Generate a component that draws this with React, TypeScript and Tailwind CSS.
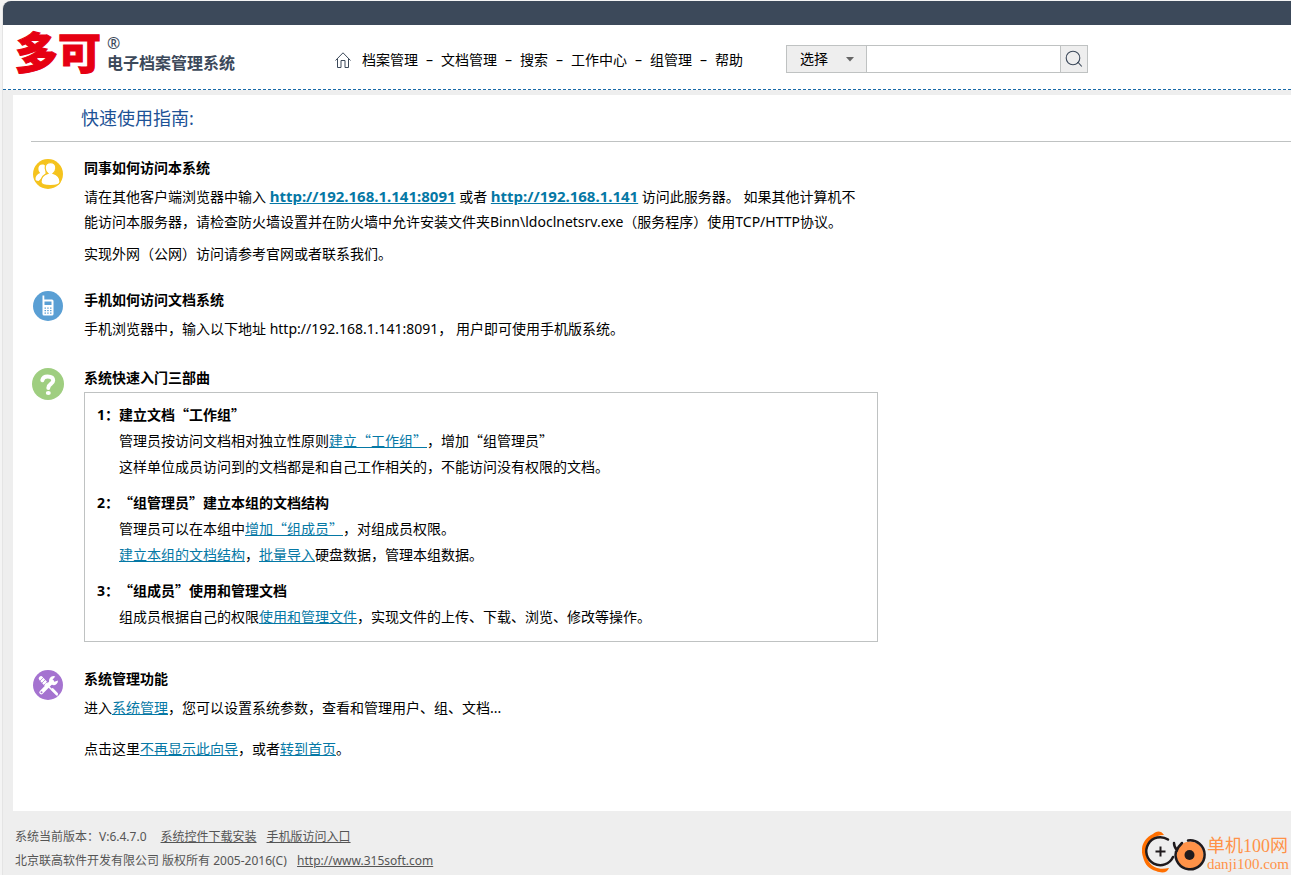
import type { ReactNode } from 'react';

const NAV_ITEMS = ['档案管理', '文档管理', '搜索', '工作中心', '组管理', '帮助'];

// Full-width curly quotes come from the CJK face, not the Latin one
function Quoted({ children }: { children: ReactNode }) {
  return (
    <>
      <span className="font-['Noto_Sans_CJK_SC',sans-serif] leading-none">“</span>
      {children}
      <span className="font-['Noto_Sans_CJK_SC',sans-serif] leading-none">”</span>
    </>
  );
}

function TextLink({ children, bold = false }: { children: ReactNode; bold?: boolean }) {
  return (
    <a
      href="#"
      className={bold ? 'text-[15px] leading-5 font-bold text-[#0578a5] underline' : 'text-[#0578a5] underline'}
    >
      {children}
    </a>
  );
}

function HomeIcon() {
  return (
    <svg width="16" height="16" viewBox="0 0 16 16" fill="none" stroke="#3c495a" strokeWidth="1" aria-hidden="true">
      <path d="M0.5 8.5 8 0.8l7.5 7.7M2.5 7v8.5h3.5V8.5h4v7h3.5V7" />
    </svg>
  );
}

function SearchIcon() {
  return (
    <svg width="18" height="18" viewBox="0 0 18 18" fill="none" stroke="#3c495a" strokeWidth="1.1" aria-hidden="true">
      <circle cx="8" cy="8" r="6.8" />
      <path d="M12 12.5h1.2l3.6 4" />
    </svg>
  );
}

function UsersIcon() {
  return (
    <svg width="32" height="32" viewBox="0 0 32 32" aria-hidden="true">
      <circle cx="16" cy="16" r="15" fill="#f5c31d" />
      <path
        d="M10.5 6.5c-2.8 0-4.3 2-4.1 4.6.1 1.7.8 2.8 1.7 3.8-2.9 1.2-4.9 3.4-4.6 6.3.1 1.2 1.2 1.6 3 1.8l7-6V8.2c-.7-1.1-1.7-1.7-3-1.7z"
        fill="#fff"
      />
      <path
        d="M18.500 4.600c-3.500 0-5.500 2.400-5.300 5.600.2 2.500 1.300 4.100 2.700 5.200-4.200 1.200-7 4.500-6.900 8.700.1 2.400 3.500 3.600 9.500 3.600s9.400-1.200 9.500-3.600c.1-4.200-2.700-7.500-6.900-8.700 1.400-1.100 2.500-2.700 2.700-5.200.2-3.200-1.800-5.600-5.300-5.600z"
        fill="#fff"
        stroke="#f5c31d"
        strokeWidth="1.2"
      />
    </svg>
  );
}

function PhoneIcon() {
  return (
    <svg width="32" height="32" viewBox="0 0 32 32" aria-hidden="true">
      <circle cx="16" cy="16" r="15" fill="#5a9fd4" />
      <path d="M10.5 5.5h1.8v4h7.7q1.5 0 1.5 1.5v13q0 1.500-1.500 1.500h-8q-1.500 0-1.500-1.500z" fill="#fff" />
      <g fill="#5a9fd4">
        <rect x="12.500" y="11.500" width="7" height="3.500" />
        <rect x="12.500" y="17.500" width="1.500" height="1.200" />
        <rect x="15.200" y="17.500" width="1.500" height="1.200" />
        <rect x="18" y="17.500" width="1.500" height="1.200" />
        <rect x="12.500" y="20" width="1.500" height="1.200" />
        <rect x="15.200" y="20" width="1.500" height="1.200" />
        <rect x="18" y="20" width="1.500" height="1.200" />
        <rect x="12.500" y="22.500" width="1.500" height="1.200" />
        <rect x="15.200" y="22.500" width="1.500" height="1.200" />
        <rect x="18" y="22.500" width="1.500" height="1.200" />
      </g>
    </svg>
  );
}

function HelpIcon() {
  return (
    <svg width="32" height="32" viewBox="0 0 32 32" aria-hidden="true">
      <circle cx="16" cy="16" r="16" fill="#9fce80" />
      <path
        d="M10.300 12.300c.6-2.700 2.600-3.700 5.300-3.700 3.200 0 5.600 1.300 5.600 4 0 3.400-4.900 3.400-4.900 7.400"
        fill="none"
        stroke="#fff"
        strokeWidth="4"
        strokeLinecap="round"
      />
      <ellipse cx="16.300" cy="25" rx="2.500" ry="2.100" fill="#fff" />
    </svg>
  );
}

function ToolsIcon() {
  return (
    <svg width="32" height="32" viewBox="0 0 32 32" aria-hidden="true">
      <circle cx="16" cy="16" r="15" fill="#a573d0" />
      <path d="M9 9.500l4.500 5" stroke="#fff" strokeWidth="4.500" strokeLinecap="round" />
      <path d="M8 12l4-4M10 14l4-4M12 16l4-4" stroke="#a573d0" strokeWidth=".7" />
      <path d="M14 15l11 11" stroke="#fff" strokeWidth="1.500" strokeLinecap="round" />
      <path d="M20.500 20.500l4.300 4.300" stroke="#fff" strokeWidth="2.600" strokeLinecap="round" />
      <path d="M9.300 23.300L20 12.500" stroke="#fff" strokeWidth="4" strokeLinecap="round" />
      <path d="M23.300 7.500a4.500 4.500 0 1 0 2.700 4l-3.600 1.300-2-2z" fill="#fff" />
      <circle cx="9.500" cy="23.200" r="1" fill="#a573d0" />
    </svg>
  );
}

function ReelsMark() {
  return (
    <svg width="64" height="42" viewBox="0 0 64 42" fill="none" aria-hidden="true">
      <path d="M22 4c-3-5-8-4-11-1C1 8-2 17 1 26c2 8 6 12 13 14 6 2.500 11 2 13-3-9 2-16 0-20-6C2 23 3 13 10 8c4-3 7-4 12-4z" fill="#ff6f00" />
      <path d="M26 8.500A14 14 0 1 0 31 26" stroke="#1f1a1d" strokeWidth="2.500" strokeLinecap="round" />
      <path d="M18.500 15.500v10M13.500 20.500h10" stroke="#1f1a1d" strokeWidth="2" />
      <circle cx="48" cy="24" r="13.500" fill="#ff9248" />
      <path d="M46 9.500a14.500 14.500 0 1 1-12 11M32 12c0 3 1 5 3 7 1-3 3-5 5-7" stroke="#1f1a1d" strokeWidth="2.500" strokeLinecap="round" />
      <circle cx="47.500" cy="24" r="5" fill="#1f1a1d" />
    </svg>
  );
}

interface GuideSectionProps {
  icon: ReactNode;
  title: string;
  className?: string;
  children: ReactNode;
}

function GuideSection({ icon, title, className = '', children }: GuideSectionProps) {
  return (
    <section className={`flex items-start gap-5 pl-[19px] ${className}`}>
      <div className="w-8 shrink-0">{icon}</div>
      <div className="min-w-0 flex-1">
        <h2 className="text-sm leading-5 font-bold">{title}</h2>
        {children}
      </div>
    </section>
  );
}

function Header() {
  return (
    <header>
      <div className="h-6 rounded-tl-lg bg-[#3c495a]" />
      <div className="flex h-[65px] items-center border-b border-dashed border-[#1a6aa8] bg-white pl-3">
        <a href="#" className="flex w-[320px] shrink-0 items-center gap-1.5 pb-2">
          <span className="text-[43px] leading-[44px] font-black whitespace-nowrap text-[#e60012] [-webkit-text-stroke:1px_#e60012]">
            多可
          </span>
          <span className="flex flex-col text-[#3c495a]">
            <span className="text-base leading-5">®</span>
            <span className="text-base leading-5 font-bold whitespace-nowrap">电子档案管理系统</span>
          </span>
        </a>

        <nav className="flex shrink-0 items-center pt-1.5 text-sm whitespace-nowrap">
          <a href="#" aria-label="首页" className="mr-[11px]">
            <HomeIcon />
          </a>
          {NAV_ITEMS.map((item, i) => (
            <span key={item} className="flex">
              {i > 0 && <span className="w-[23px] text-center">–</span>}
              <a href="#">{item}</a>
            </span>
          ))}
        </nav>

        <form className="mt-1 ml-[43px] flex h-7 shrink-0 border border-[#bfc2c2]">
          <div className="relative border-r border-[#bfc2c2] bg-[#eee]">
            <select aria-label="选择" className="h-full w-[79px] appearance-none bg-transparent pl-[13px] text-sm outline-none">
              <option>选择</option>
            </select>
            <svg className="pointer-events-none absolute top-[11px] right-3" width="8" height="5" viewBox="0 0 8 5" aria-hidden="true">
              <path d="M0 0h8L4 4.500z" fill="#666" />
            </svg>
          </div>
          <input type="text" aria-label="搜索" className="w-[193px] bg-white px-2 text-sm outline-none" />
          <button type="submit" aria-label="搜索" className="flex w-[27px] items-center justify-center border-l border-[#bfc2c2] bg-[#eee]">
            <SearchIcon />
          </button>
        </form>
      </div>
    </header>
  );
}

function Steps() {
  return (
    <div className="mt-1 flex max-w-[794px] flex-col gap-2.5 border border-[#bfc2c2] px-3 pt-[9px] pb-[11px] text-sm leading-[26px]">
      <div>
        <h3 className="font-bold">
          1：建立文档<Quoted>工作组</Quoted>
        </h3>
        <p className="pl-[22px]">
          管理员按访问文档相对独立性原则
          <TextLink>
            建立<Quoted>工作组</Quoted>
          </TextLink>
          ，增加<Quoted>组管理员</Quoted>
        </p>
        <p className="pl-[22px]">这样单位成员访问到的文档都是和自己工作相关的，不能访问没有权限的文档。</p>
      </div>
      <div>
        <h3 className="font-bold">
          2：<Quoted>组管理员</Quoted>建立本组的文档结构
        </h3>
        <p className="pl-[22px]">
          管理员可以在本组中
          <TextLink>
            增加<Quoted>组成员</Quoted>
          </TextLink>
          ，对组成员权限。
        </p>
        <p className="pl-[22px]">
          <TextLink>建立本组的文档结构</TextLink>，<TextLink>批量导入</TextLink>硬盘数据，管理本组数据。
        </p>
      </div>
      <div>
        <h3 className="font-bold">
          3：<Quoted>组成员</Quoted>使用和管理文档
        </h3>
        <p className="pl-[22px]">
          组成员根据自己的权限<TextLink>使用和管理文件</TextLink>，实现文件的上传、下载、浏览、修改等操作。
        </p>
      </div>
    </div>
  );
}

export default function App() {
  return (
    <div
      lang="zh-CN"
      className="min-h-screen bg-[#f4f4f4] pt-px pl-0.5 font-['Noto_Sans','Noto_Sans_CJK_SC',sans-serif] text-black [text-spacing-trim:space-all]"
    >
      <div className="flex min-h-[calc(100vh-1px)] flex-col rounded-tl-lg border-l border-[#e4e4e4] bg-[#eee]">
        <Header />

        <main className="mt-[5px] ml-2.5 bg-white pb-[50px]">
          <h1 className="ml-[18px] border-b border-[#bfc2c2] pl-[50px] text-lg leading-[46px] text-[#1d5296]">快速使用指南:</h1>

          <GuideSection icon={<UsersIcon />} title="同事如何访问本系统" className="mt-4">
            <p className="mt-1.5 text-sm leading-[25px]">
              请在其他客户端浏览器中输入 <TextLink bold>http://192.168.1.141:8091</TextLink> 或者{' '}
              <TextLink bold>http://192.168.1.141</TextLink> 访问此服务器。 如果其他计算机不
              <br />
              能访问本服务器，请检查防火墙设置并在防火墙中允许安装文件夹Binn\ldoclnetsrv.exe（服务程序）使用TCP/HTTP协议。
            </p>
            <p className="mt-[7px] text-sm leading-[25px]">实现外网（公网）访问请参考官网或者联系我们。</p>
          </GuideSection>

          <GuideSection icon={<PhoneIcon />} title="手机如何访问文档系统" className="mt-6">
            <p className="mt-1.5 text-sm leading-[25px]">
              手机浏览器中，输入以下地址 http://192.168.1.141:8091， 用户即可使用手机版系统。
            </p>
          </GuideSection>

          <GuideSection icon={<HelpIcon />} title="系统快速入门三部曲" className="mt-[27px]">
            <Steps />
          </GuideSection>

          <GuideSection icon={<ToolsIcon />} title="系统管理功能" className="mt-[27px]">
            <p className="mt-1.5 text-sm leading-[25px]">
              进入<TextLink>系统管理</TextLink>，您可以设置系统参数，查看和管理用户、组、文档...
            </p>
            <p className="mt-4 text-sm leading-[25px]">
              点击这里<TextLink>不再显示此向导</TextLink>，或者<TextLink>转到首页</TextLink>。
            </p>
          </GuideSection>
        </main>

        <footer className="flex items-start justify-between pt-3.5 pl-3 text-xs leading-6 text-[#555]">
          <div>
            <p className="flex gap-2.5">
              <span className="mr-1">系统当前版本：V:6.4.7.0</span>
              <a href="#" className="underline">系统控件下载安装</a>
              <a href="#" className="underline">手机版访问入口</a>
            </p>
            <p>
              北京联高软件开发有限公司 版权所有 2005-2016(C)&nbsp;{' '}
              <a href="#" className="ml-1 underline">http://www.315soft.com</a>
            </p>
          </div>
          <div className="flex items-end gap-px pt-1.5 pr-0.5 font-['Liberation_Serif','Noto_Sans_CJK_SC',serif] text-[#ff9248]">
            <ReelsMark />
            <div className="whitespace-nowrap">
              <p className="text-lg leading-[18px]">单机100网</p>
              <p className="text-[15px] leading-[18px]">danji100.com</p>
            </div>
          </div>
        </footer>
      </div>
    </div>
  );
}
